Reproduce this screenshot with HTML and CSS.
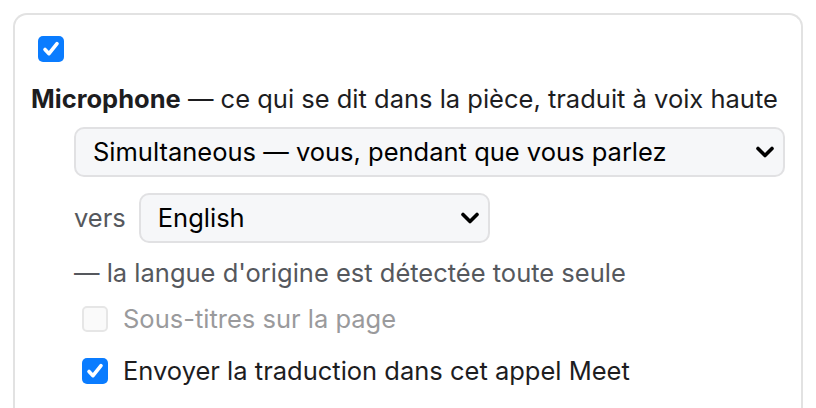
FILE: index.html
```html
<!DOCTYPE html>
<html lang="fr">
<head>
<meta charset="utf-8">
<link rel="stylesheet" href="styles.css">
</head>
<body>
<div class="card">
  <div class="top-check">
    <span class="cb cb-on"><svg viewBox="0 0 26 26" width="26" height="26"><path d="M7 13.5l4 4.2 8-10" fill="none" stroke="#fff" stroke-width="3.6" stroke-linecap="round" stroke-linejoin="round"/></svg></span>
  </div>
  <p class="title"><b>Microphone</b> — ce qui se dit dans la pièce, traduit à voix haute</p>
  <div class="indent">
    <div class="select select-wide">
      <span class="select-text">Simultaneous — vous, pendant que vous parlez</span>
      <svg class="chev" viewBox="0 0 20 12" width="20" height="12"><path d="M3 2.5l7 7 7-7" fill="none" stroke="#000" stroke-width="3.6" stroke-linecap="round" stroke-linejoin="round"/></svg>
    </div>
    <div class="lang-row">
      <span class="muted">vers</span>
      <div class="select select-lang">
        <span class="select-text">English</span>
        <svg class="chev" viewBox="0 0 20 12" width="20" height="12"><path d="M3 2.5l7 7 7-7" fill="none" stroke="#000" stroke-width="3.6" stroke-linecap="round" stroke-linejoin="round"/></svg>
      </div>
    </div>
    <p class="muted note">— la langue d'origine est détectée toute seule</p>
    <div class="opt opt-disabled">
      <span class="cb cb-off"></span>
      <span>Sous-titres sur la page</span>
    </div>
    <div class="opt opt-last">
      <span class="cb cb-on"><svg viewBox="0 0 26 26" width="26" height="26"><path d="M7 13.5l4 4.2 8-10" fill="none" stroke="#fff" stroke-width="3.6" stroke-linecap="round" stroke-linejoin="round"/></svg></span>
      <span>Envoyer la traduction dans cet appel Meet</span>
    </div>
  </div>
</div>
</body>
</html>
```
FILE: styles.css
```css
* { box-sizing: border-box; }
html, body { margin: 0; padding: 0; background: #fff; }
body {
  font-family: Inter, "Noto Sans", sans-serif;
  font-size: 25.5px;
  line-height: 32px;
  color: #1d1d1f;
}
.card {
  margin: 13px 13px 0 13px;
  border: 2px solid #e2e2e2;
  border-bottom: 0;
  border-radius: 14px 14px 0 0;
  padding: 21px 16px 0 16px;
  height: 395px;
}
.top-check { padding-left: 7px; height: 26px; display: flex; }
.cb {
  width: 26px;
  height: 26px;
  border-radius: 5px;
  flex: none;
  display: block;
}
.cb svg { display: block; }
.cb-on { background: #0a7cff; }
.cb-off { background: #fafafa; border: 2px solid #e6e6e6; }
.title { margin: 21px 0 0 0; }
.title b { font-weight: 700; }
.indent { margin-left: 43px; }
.select {
  display: flex;
  align-items: center;
  height: 50px;
  border: 2px solid #e1e1e3;
  border-radius: 10px;
  background: #f6f7f9;
  padding: 0 8px 0 17px;
  color: #000;
}
.select-wide { margin-top: 12px; }
.select-text { flex: 1; }
.chev { flex: none; }
.lang-row { display: flex; align-items: center; gap: 13px; margin-top: 16px; }
.select-lang { width: 351px; }
.muted { color: #55585d; }
.note { margin: 14px 0 0 0; }
.opt { display: flex; align-items: center; gap: 15px; padding-left: 8px; }
.opt-disabled { margin-top: 14px; color: #9a9a9c; }
.opt-last { margin-top: 20px; }
```
